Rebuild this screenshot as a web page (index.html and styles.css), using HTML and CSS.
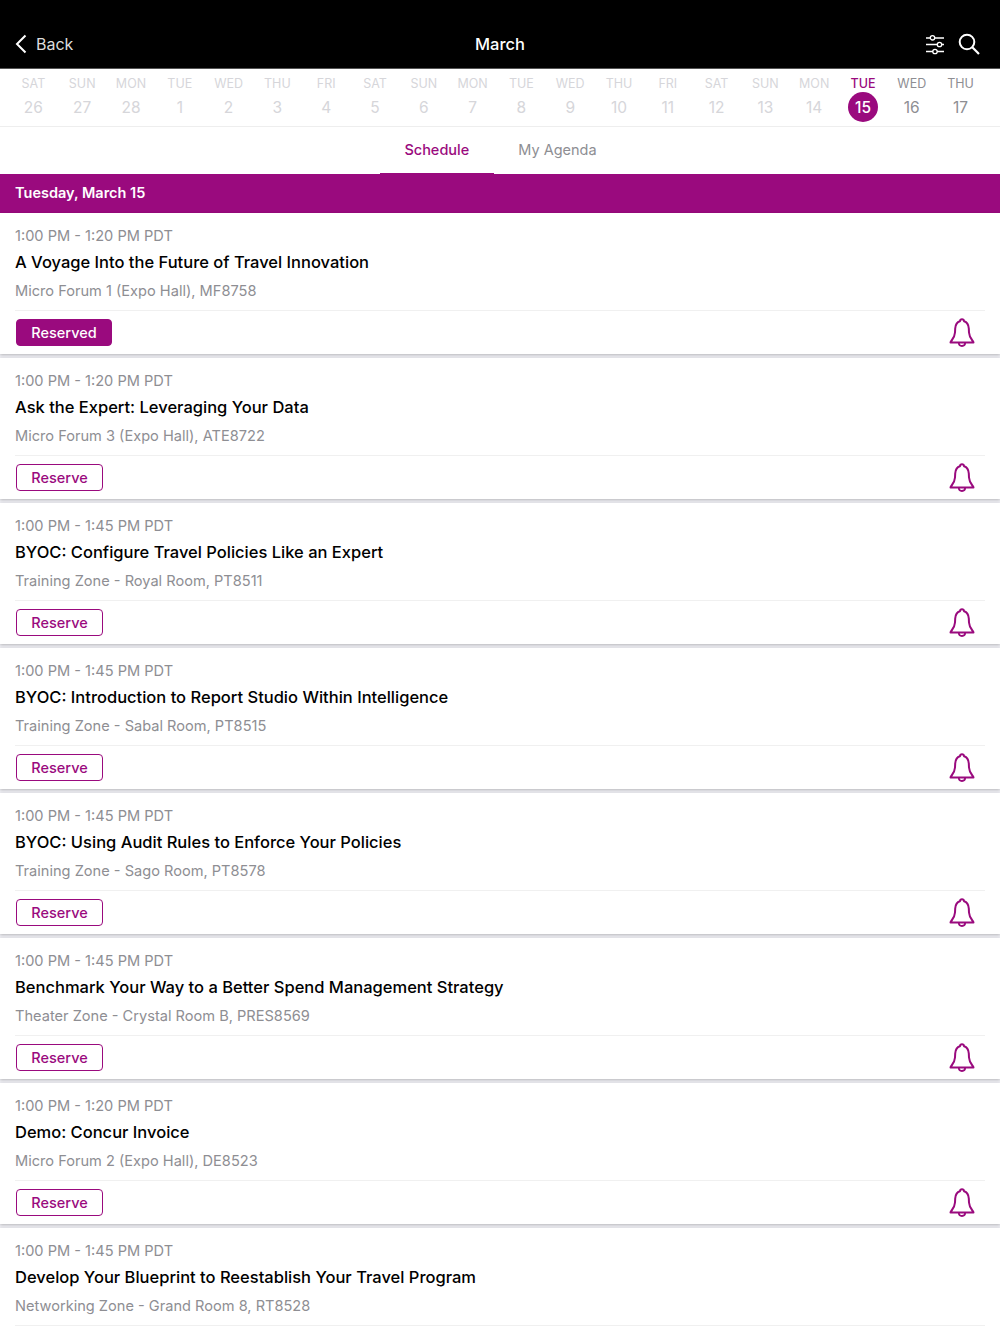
FILE: index.html
```html
<!DOCTYPE html>
<html lang="en">

<head>
  <meta charset="UTF-8">
  <title>Schedule - March</title>
  <link rel="stylesheet" href="styles.css">
</head>

<body>

  <svg class="icon-defs" width="0" height="0">
    <symbol id="bell" viewBox="0 0 28 30">
      <path d="M2.500 24.500C2.500 22.800 6.600 21 7 14.500l.2-4C7.500 6.500 9.600 4 11.900 3.300 12.100 2 13 1.300 14 1.300s1.900.7 2.100 2c2.300.7 4.400 3.200 4.700 7.200l.2 4c.4 6.500 4.500 8.300 4.500 10z" fill="none" stroke="currentColor" stroke-width="2" stroke-linejoin="round" />
      <path d="M10.800 24.500c0 2 1.300 3.500 3.200 3.500s3.200-1.500 3.200-3.500" fill="none" stroke="currentColor" stroke-width="1.800" />
    </symbol>
  </svg>

  <!-- Top bar -->
  <header class="topbar">
    <div class="back">
      <svg class="back-icon" width="12" height="20" viewBox="0 0 12 20">
        <path d="M10.500 1.500 2 10l8.500 8.500" fill="none" stroke="#fff" stroke-width="2" />
      </svg>
      <span>Back</span>
    </div>
    <div class="topbar-title">March</div>
    <div class="topbar-icons">
      <svg width="20" height="21" viewBox="0 0 20 21">
        <g fill="none" stroke="#fff" stroke-width="1.300">
          <path d="M1 4h4.500M9.500 4H19M1 10.500h11.500M16.500 10.500H19M1 17.500h7M12 17.500h7" />
          <circle cx="7.500" cy="3.800" r="2.200" />
          <circle cx="14.500" cy="10.500" r="2.200" />
          <circle cx="10" cy="17.500" r="2.200" />
        </g>
      </svg>
      <svg width="22" height="22" viewBox="0 0 22 22">
        <circle cx="9" cy="9" r="7.300" fill="none" stroke="#fff" stroke-width="2" />
        <path d="M14.300 14.300 21 21" fill="none" stroke="#fff" stroke-width="2.200" />
      </svg>
    </div>
  </header>

  <!-- Date strip -->
  <div class="datestrip">
    <div class="day past"><span class="dow">SAT</span><span class="num">26</span></div>
    <div class="day past"><span class="dow">SUN</span><span class="num">27</span></div>
    <div class="day past"><span class="dow">MON</span><span class="num">28</span></div>
    <div class="day past"><span class="dow">TUE</span><span class="num">1</span></div>
    <div class="day past"><span class="dow">WED</span><span class="num">2</span></div>
    <div class="day past"><span class="dow">THU</span><span class="num">3</span></div>
    <div class="day past"><span class="dow">FRI</span><span class="num">4</span></div>
    <div class="day past"><span class="dow">SAT</span><span class="num">5</span></div>
    <div class="day past"><span class="dow">SUN</span><span class="num">6</span></div>
    <div class="day past"><span class="dow">MON</span><span class="num">7</span></div>
    <div class="day past"><span class="dow">TUE</span><span class="num">8</span></div>
    <div class="day past"><span class="dow">WED</span><span class="num">9</span></div>
    <div class="day past"><span class="dow">THU</span><span class="num">10</span></div>
    <div class="day past"><span class="dow">FRI</span><span class="num">11</span></div>
    <div class="day past"><span class="dow">SAT</span><span class="num">12</span></div>
    <div class="day past"><span class="dow">SUN</span><span class="num">13</span></div>
    <div class="day past"><span class="dow">MON</span><span class="num">14</span></div>
    <div class="day today"><span class="dow">TUE</span><span class="num">15</span></div>
    <div class="day"><span class="dow">WED</span><span class="num">16</span></div>
    <div class="day"><span class="dow">THU</span><span class="num">17</span></div>
  </div>

  <!-- Tabs -->
  <nav class="tabs">
    <div class="tab active">Schedule</div>
    <div class="tab">My Agenda</div>
  </nav>

  <div class="date-heading">Tuesday, March 15</div>

  <!-- Sessions -->
  <main class="sessions">
    <article class="session">
      <div class="time">1:00 PM - 1:20 PM PDT</div>
      <h2 class="title">A Voyage Into the Future of Travel Innovation</h2>
      <div class="place">Micro Forum 1 (Expo Hall), MF8758</div>
      <div class="actions">
        <button class="btn reserved">Reserved</button>
        <svg class="bell"><use href="#bell" /></svg>
      </div>
    </article>

    <article class="session">
      <div class="time">1:00 PM - 1:20 PM PDT</div>
      <h2 class="title">Ask the Expert: Leveraging Your Data</h2>
      <div class="place">Micro Forum 3 (Expo Hall), ATE8722</div>
      <div class="actions">
        <button class="btn">Reserve</button>
        <svg class="bell"><use href="#bell" /></svg>
      </div>
    </article>

    <article class="session">
      <div class="time">1:00 PM - 1:45 PM PDT</div>
      <h2 class="title">BYOC: Configure Travel Policies Like an Expert</h2>
      <div class="place">Training Zone - Royal Room, PT8511</div>
      <div class="actions">
        <button class="btn">Reserve</button>
        <svg class="bell"><use href="#bell" /></svg>
      </div>
    </article>

    <article class="session">
      <div class="time">1:00 PM - 1:45 PM PDT</div>
      <h2 class="title">BYOC: Introduction to Report Studio Within Intelligence</h2>
      <div class="place">Training Zone - Sabal Room, PT8515</div>
      <div class="actions">
        <button class="btn">Reserve</button>
        <svg class="bell"><use href="#bell" /></svg>
      </div>
    </article>

    <article class="session">
      <div class="time">1:00 PM - 1:45 PM PDT</div>
      <h2 class="title">BYOC: Using Audit Rules to Enforce Your Policies</h2>
      <div class="place">Training Zone - Sago Room, PT8578</div>
      <div class="actions">
        <button class="btn">Reserve</button>
        <svg class="bell"><use href="#bell" /></svg>
      </div>
    </article>

    <article class="session">
      <div class="time">1:00 PM - 1:45 PM PDT</div>
      <h2 class="title">Benchmark Your Way to a Better Spend Management Strategy</h2>
      <div class="place">Theater Zone - Crystal Room B, PRES8569</div>
      <div class="actions">
        <button class="btn">Reserve</button>
        <svg class="bell"><use href="#bell" /></svg>
      </div>
    </article>

    <article class="session">
      <div class="time">1:00 PM - 1:20 PM PDT</div>
      <h2 class="title">Demo: Concur Invoice</h2>
      <div class="place">Micro Forum 2 (Expo Hall), DE8523</div>
      <div class="actions">
        <button class="btn">Reserve</button>
        <svg class="bell"><use href="#bell" /></svg>
      </div>
    </article>

    <article class="session">
      <div class="time">1:00 PM - 1:45 PM PDT</div>
      <h2 class="title">Develop Your Blueprint to Reestablish Your Travel Program</h2>
      <div class="place">Networking Zone - Grand Room 8, RT8528</div>
      <div class="actions"></div>
    </article>
  </main>

</body>

</html>
```

FILE: styles.css
```css
/* Global Styles */
html,
body {
  height: 1334px;
  overflow: hidden;
}

body {
  margin: 0;
  font-family: Inter, "Liberation Sans", sans-serif;
  background-color: #f0f0f5;
  color: #000;
}

.icon-defs {
  display: block;
  height: 0;
}

/* Top bar */
.topbar {
  height: 69px;
  box-sizing: border-box;
  padding: 20px 20px 0 15px;
  display: flex;
  align-items: center;
  justify-content: space-between;
  background-color: #000;
  color: #fff;
  border-bottom: 1px solid #555;
  position: relative;
}

.back {
  display: flex;
  align-items: center;
  gap: 9px;
  font-size: 16px;
  color: #ddd;
}

.topbar-title {
  position: absolute;
  left: 0;
  right: 0;
  bottom: 13px;
  text-align: center;
  font-size: 16.5px;
  font-weight: 500;
  line-height: 22px;
}

.topbar-icons {
  display: flex;
  align-items: center;
  gap: 13px;
}

/* Date strip */
.datestrip {
  display: grid;
  grid-template-columns: repeat(20, 1fr);
  height: 57px;
  padding: 0 15px 0 9px;
  background-color: #fff;
  border-bottom: 1px solid #eee;
}

.day {
  display: flex;
  flex-direction: column;
  align-items: center;
  color: #8e8e93;
}

.day.past {
  color: #d6d6da;
}

.dow {
  margin-top: 7px;
  font-size: 12.500px;
  line-height: 15px;
  font-weight: 400;
}

.num {
  width: 30px;
  height: 30px;
  margin-top: 1px;
  border-radius: 50%;
  display: flex;
  align-items: center;
  justify-content: center;
  font-size: 15.500px;
}

.today .dow {
  color: #9a0a7e;
  font-weight: 500;
}

.today .num {
  background-color: #9a0a7e;
  color: #fff;
  font-weight: 500;
}

/* Tabs */
.tabs {
  display: flex;
  justify-content: center;
  height: 47px;
  padding-left: 1px;
  background-color: #fff;
}

.tab {
  padding: 0 24.500px;
  line-height: 46px;
  font-size: 14.500px;
  color: #8e8e93;
}

.tab.active {
  color: #9a0a7e;
  font-weight: 500;
  border-bottom: 1px solid #9a0a7e;
  height: 46px;
}

.date-heading {
  height: 39px;
  line-height: 38px;
  padding-left: 15px;
  background-color: #9a0a7e;
  color: #fff;
  font-size: 14.500px;
  font-weight: 600;
}

/* Session cards */
.session {
  height: 141px;
  margin-bottom: 4px;
  padding: 0 15px;
  background-color: #fff;
  box-shadow: 0 1px 3px rgba(0, 0, 0, 0.25);
}

.time {
  padding-top: 13px;
  line-height: 20px;
  font-size: 14.600px;
  color: #8e8e93;
}

.title {
  margin: 0;
  padding-top: 6px;
  line-height: 21px;
  font-size: 16.500px;
  font-weight: 500;
}

.place {
  padding-top: 8px;
  line-height: 20px;
  font-size: 14.600px;
  color: #8e8e93;
}

.actions {
  margin-top: 9px;
  padding-top: 8px;
  display: flex;
  align-items: flex-start;
  justify-content: space-between;
  border-top: 1px solid #f0f0f0;
}

.btn {
  height: 27px;
  width: 87px;
  margin-left: 1px;
  padding: 0 0 1px;
  font-family: inherit;
  font-size: 14.500px;
  font-weight: 500;
  color: #9a0a7e;
  background-color: #fff;
  border: 1px solid #9a0a7e;
  border-radius: 4px;
}

.btn.reserved {
  width: 96px;
  background-color: #9a0a7e;
  color: #fff;
}

.bell {
  width: 28px;
  height: 30px;
  margin: -1px 9px 0 0;
  color: #9a0a7e;
}
```
